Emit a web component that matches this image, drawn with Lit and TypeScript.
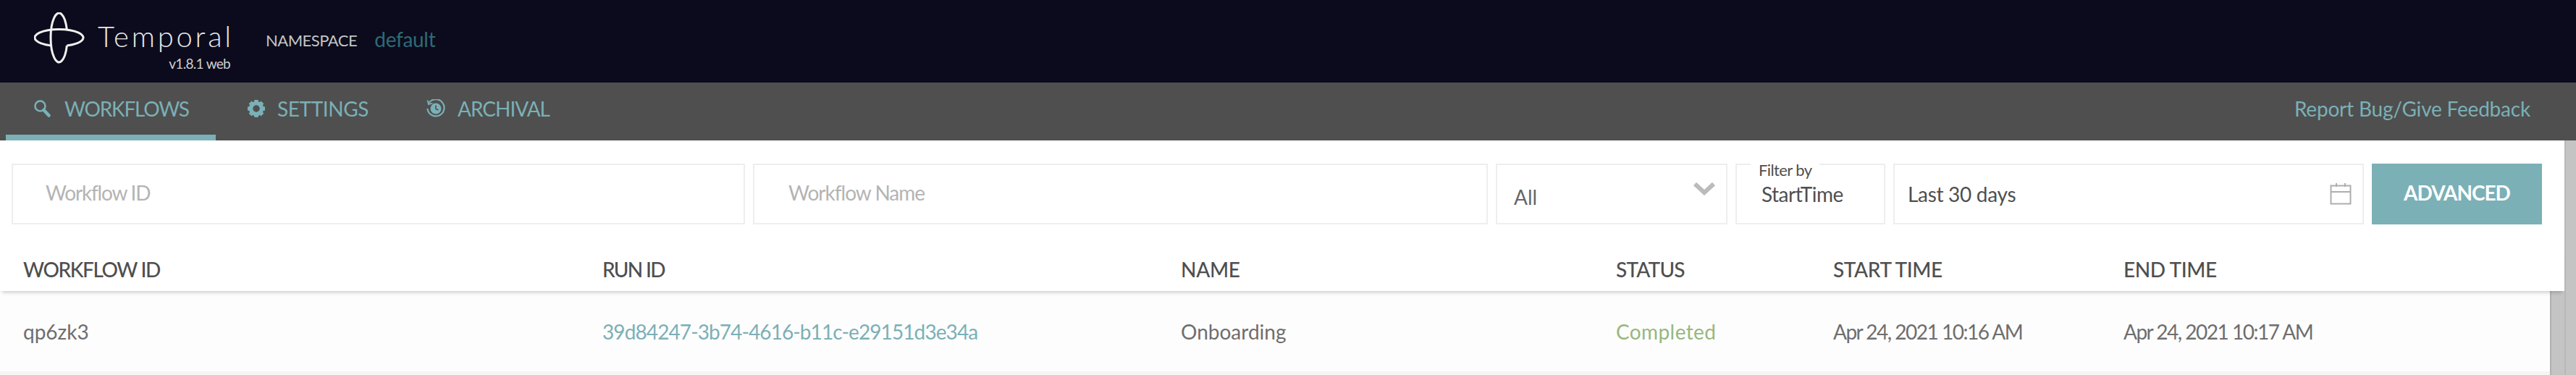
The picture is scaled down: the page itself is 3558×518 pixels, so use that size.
import { LitElement, html, css, svg } from "lit";
import { customElement } from "lit/decorators.js";

const teeth = Array.from({ length: 8 }, (_, i) => i * 45);

@customElement("app-root")
export class AppRoot extends LitElement {
  static styles = css`
    :host {
      display: block;
      width: 3558px;
      height: 518px;
      overflow: hidden;
      font-family: "Lato", "Open Sans", sans-serif;
      background: #fff;
      color: #4f4f4f;
    }
    svg { display: block; flex: none; }
    .top {
      height: 114px;
      background: #0b0b1d;
      display: flex;
      align-items: flex-start;
      padding-left: 47px;
    }
    .logo { margin-top: 17px; }
    .brand { margin-left: 18px; width: 188px; display: flex; flex-direction: column; }
    .brand-name {
      margin-top: 26px;
      font-size: 40px;
      line-height: 48px;
      letter-spacing: 3.8px;
      color: #e8e8e8;
      font-weight: 300;
      white-space: nowrap;
    }
    .brand-ver {
      align-self: flex-end;
      margin-right: 5px;
      font-size: 19px;
      line-height: 24px;
      margin-top: 2px;
      color: #cfcfcf;
      white-space: nowrap;
      letter-spacing: -0.7px;
    }
    .ns-label { margin: 40px 0 0 44px; font-size: 22px; line-height: 32px; color: #c4c4c4; letter-spacing: -0.5px; }
    .ns-value { margin: 36px 0 0 24px; font-size: 28px; line-height: 36px; color: #2f6a76; letter-spacing: -0.3px; }
    .nav {
      height: 80px;
      background: #4f4f4f;
      display: flex;
      color: #7bb0b6;
      font-size: 28px;
      align-items: stretch;
      padding-left: 8px;
    }
    .tab {
      display: flex;
      align-items: center;
      box-sizing: border-box;
      border-bottom: 8px solid transparent;
      height: 80px;
      white-space: nowrap;
    }
    .tab.active { border-bottom-color: #7bb0b6; }
    .t1 { width: 290px; padding-left: 39px; gap: 19px; letter-spacing: -1.2px; }
    .t2 { width: 291px; padding-left: 44px; gap: 17px; letter-spacing: -0.4px; }
    .t3 { padding-left: 0; gap: 17px; letter-spacing: -1px; }
    .report { margin-left: auto; margin-right: 63px; align-self: center; font-size: 28px; margin-top: -8px; letter-spacing: -0.2px; }
    .body { display: flex; height: 324px; }
    .main { flex: 1; min-width: 0; display: flex; flex-direction: column; }
    .outer-bar { width: 16px; background: #c4c4c4; border-left: 2px solid #b8b8b8; box-sizing: border-box; }
    .filters {
      display: flex;
      gap: 11px;
      padding: 32px 31px 0 16px;
      height: 84px;
    }
    .field {
      box-sizing: border-box;
      height: 84px;
      border: 2px solid #eee;
      display: flex;
      align-items: center;
      position: relative;
      font-size: 28px;
      white-space: nowrap;
    }
    .f-id { width: 1013px; padding-left: 45px; color: #b4b4b4; padding-bottom: 4px; letter-spacing: -1.2px; }
    .f-name { width: 1015px; padding-left: 47px; color: #b4b4b4; padding-bottom: 4px; letter-spacing: -1px; }
    .f-status { width: 320px; padding-left: 23px; color: #666; padding-top: 8px; justify-content: space-between; padding-right: 15px; }
    .chev { margin-top: -24px; }
    .f-by { width: 207px; padding-left: 34px; color: #4f4f4f; letter-spacing: -0.5px; }
    .legend {
      position: absolute;
      left: 19px;
      top: -6px;
      padding: 0 11px;
      background: #fff;
      font-size: 22px;
      line-height: 26px;
      color: #4f4f4f;
      letter-spacing: -0.6px;
    }
    .f-date { width: 650px; padding-left: 18px; padding-right: 15px; color: #4f4f4f; justify-content: space-between; letter-spacing: -0.3px; }
    .adv {
      width: 235px;
      height: 84px;
      background: #7bb0b6;
      color: #fff;
      font-weight: 700;
      font-size: 28px;
      letter-spacing: -1px;
      display: flex;
      align-items: center;
      justify-content: center;
      padding-bottom: 4px;
      box-sizing: border-box;
    }
    .table { flex: 1; display: flex; flex-direction: column; margin-top: 35px; min-height: 0; }
    .thead, .trow {
      display: grid;
      grid-template-columns: 800px 799px 601px 300px 401px 1fr;
      padding-left: 32px;
      align-items: center;
      white-space: nowrap;
    }
    .thead {
      height: 57px;
      font-size: 28px;
      color: #4f4f4f;
      font-weight: 500;
      box-shadow: 0 5px 5px -3px rgba(0, 0, 0, 0.2);
      position: relative;
      padding-bottom: 4px;
      box-sizing: border-box;
      background: #fff;
    }
    .h-wf { letter-spacing: -1.4px; }
    .h-run { letter-spacing: -1.7px; }
    .h-name { letter-spacing: -0.3px; }
    .h-status { letter-spacing: -0.8px; }
    .h-start { letter-spacing: -0.4px; }
    .h-end { letter-spacing: -0.4px; }
    .tbody { flex: 1; display: flex; min-height: 0; }
    .rows { flex: 1; background: #fdfdfd; display: flex; flex-direction: column; }
    .trow {
      height: 112px;
      font-size: 28px;
      color: #6e6e6e;
      border-bottom: 5px solid #f5f5f5;
      box-sizing: content-box;
    }
    .link { color: #7bb0b6; letter-spacing: -0.9px; }
    .ok { color: #97b77e; letter-spacing: 0.4px; }
    .date { letter-spacing: -1.5px; }
    .inner-bar { width: 20px; background: #c4c4c4; border-left: 2px solid #b0b0b0; box-sizing: border-box; }
  `;

  render() {
    return html`
      <div class="top">
        <svg class="logo" width="70" height="72" viewBox="47 17 70 72" fill="none" stroke="#f0f0f0" stroke-width="3">
          <path d="M92.4 41.1A11.5 34 0 1 0 92.4 62.9" />
          <path d="M70.6 62.9A33.5 11.5 0 1 1 92.4 62.9" />
        </svg>
        <div class="brand">
          <span class="brand-name">Temporal</span>
          <span class="brand-ver">v1.8.1 web</span>
        </div>
        <span class="ns-label">NAMESPACE</span>
        <span class="ns-value">default</span>
      </div>
      <div class="nav">
        <div class="tab active t1">
          <svg width="23" height="24" viewBox="0 0 23 24" fill="none" stroke="#7bb0b6">
            <circle cx="8.5" cy="8.5" r="7" stroke-width="2.6" />
            <path d="M13.5 14L20.5 21.5" stroke-width="4.6" stroke-linecap="round" />
          </svg>
          <span>WORKFLOWS</span>
        </div>
        <div class="tab t2">
          <svg width="24" height="26" viewBox="-12 -13 24 26" fill="none" stroke="#7bb0b6">
            <circle r="7.5" stroke-width="5.5" />
            ${teeth.map((a) => svg`<path d="M0-9V-12" stroke-width="5.5" transform="rotate(${a})" />`)}
          </svg>
          <span>SETTINGS</span>
        </div>
        <div class="tab t3">
          <svg width="26" height="26" viewBox="0 0 26 26" fill="none" stroke="#7bb0b6">
            <path d="M3.2 5.5A11.6 11.6 0 1 1 1.4 13" stroke-width="2.2" />
            <path d="M1.5 1.5L3 7.2L8.5 5.5" stroke-width="1.8" />
            <circle cx="13" cy="13" r="7.5" fill="#7bb0b6" stroke="none" />
            <path d="M13 8.5V13.4L16.5 15" stroke="#4f4f4f" stroke-width="1.6" />
          </svg>
          <span>ARCHIVAL</span>
        </div>
        <span class="report">Report Bug/Give Feedback</span>
      </div>
      <div class="body">
        <div class="main">
          <div class="filters">
            <div class="field f-id">Workflow ID</div>
            <div class="field f-name">Workflow Name</div>
            <div class="field f-status">
              <span>All</span>
              <svg class="chev" width="30" height="20" viewBox="0 0 30 20" fill="none" stroke="#bbb" stroke-width="6">
                <path d="M2 4L15 16L28 4" />
              </svg>
            </div>
            <div class="field f-by"><span class="legend">Filter by</span>StartTime</div>
            <div class="field f-date">
              <span>Last 30 days</span>
              <svg width="30" height="30" viewBox="0 0 30 30" fill="none" stroke="#aeaeae" stroke-width="2">
                <rect x="1.5" y="3.5" width="27" height="25" />
                <path d="M1.5 12H28.5M9 0V5M21 0V5" />
              </svg>
            </div>
            <div class="adv">ADVANCED</div>
          </div>
          <div class="table">
            <div class="thead">
              <span class="h-wf">WORKFLOW ID</span><span class="h-run">RUN ID</span><span class="h-name">NAME</span><span class="h-status">STATUS</span><span class="h-start">START TIME</span><span class="h-end">END TIME</span>
            </div>
            <div class="tbody">
              <div class="rows">
                <div class="trow">
                  <span>qp6zk3</span>
                  <span class="link">39d84247-3b74-4616-b11c-e29151d3e34a</span>
                  <span>Onboarding</span>
                  <span class="ok">Completed</span>
                  <span class="date">Apr 24, 2021 10:16 AM</span>
                  <span class="date">Apr 24, 2021 10:17 AM</span>
                </div>
              </div>
              <div class="inner-bar"></div>
            </div>
          </div>
        </div>
        <div class="outer-bar"></div>
      </div>
    `;
  }
}
